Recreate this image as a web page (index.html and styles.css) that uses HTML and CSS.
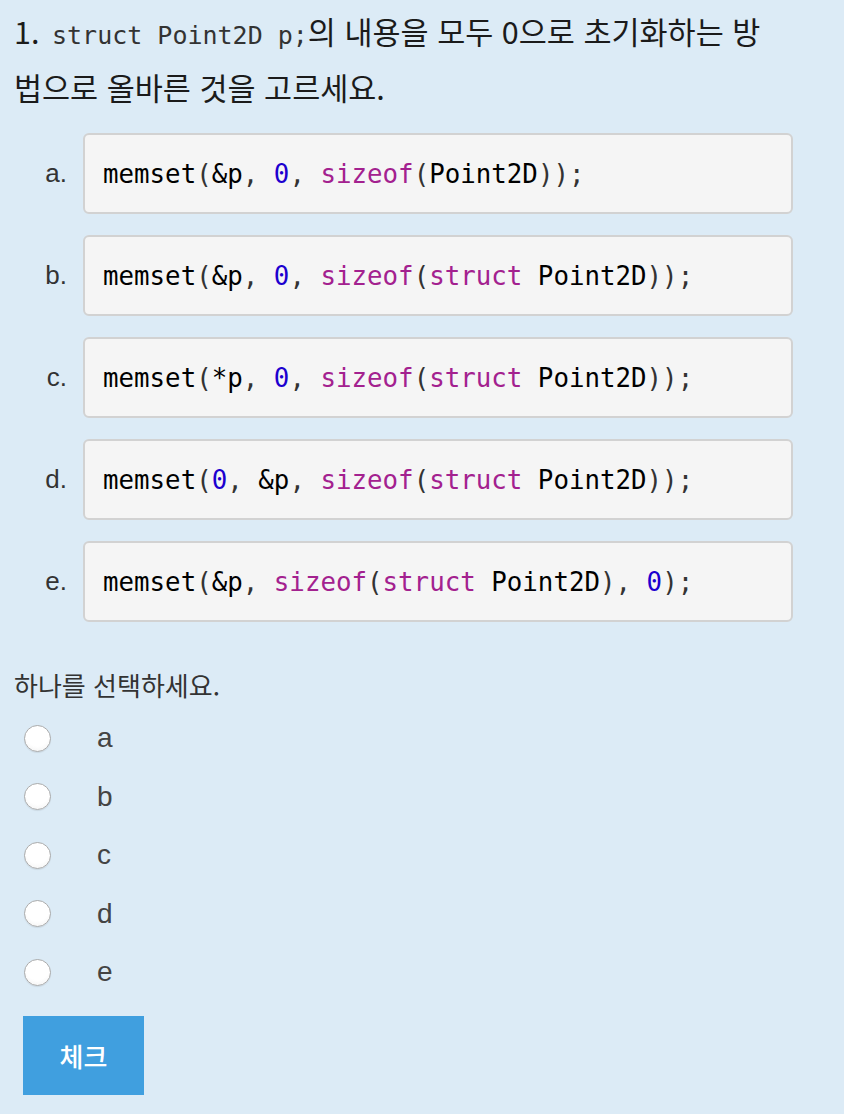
FILE: index.html
```html
<!DOCTYPE html>
<html lang="ko">
<head>
<meta charset="utf-8">
<title>Quiz</title>
<link rel="stylesheet" href="styles.css">
</head>
<body>
<div class="page">
  <div class="qtext"><span class="num">1.</span> <code class="inline">struct Point2D p;</code>의 내용을 모두 0으로 초기화하는 방법으로 올바른 것을 고르세요.</div>

  <div class="options">
    <div class="option">
      <span class="olabel">a.</span>
      <div class="codebox"><code class="src"><span class="t">memset</span><span class="p">(</span>&amp;p<span class="p">,</span> <span class="n">0</span><span class="p">,</span> <span class="k">sizeof</span><span class="p">(</span>Point2D<span class="p">));</span></code></div>
    </div>
    <div class="option">
      <span class="olabel">b.</span>
      <div class="codebox"><code class="src"><span class="t">memset</span><span class="p">(</span>&amp;p<span class="p">,</span> <span class="n">0</span><span class="p">,</span> <span class="k">sizeof</span><span class="p">(</span><span class="k">struct</span> Point2D<span class="p">));</span></code></div>
    </div>
    <div class="option">
      <span class="olabel">c.</span>
      <div class="codebox"><code class="src"><span class="t">memset</span><span class="p">(</span>*p<span class="p">,</span> <span class="n">0</span><span class="p">,</span> <span class="k">sizeof</span><span class="p">(</span><span class="k">struct</span> Point2D<span class="p">));</span></code></div>
    </div>
    <div class="option">
      <span class="olabel">d.</span>
      <div class="codebox"><code class="src"><span class="t">memset</span><span class="p">(</span><span class="n">0</span><span class="p">,</span> &amp;p<span class="p">,</span> <span class="k">sizeof</span><span class="p">(</span><span class="k">struct</span> Point2D<span class="p">));</span></code></div>
    </div>
    <div class="option">
      <span class="olabel">e.</span>
      <div class="codebox"><code class="src"><span class="t">memset</span><span class="p">(</span>&amp;p<span class="p">,</span> <span class="k">sizeof</span><span class="p">(</span><span class="k">struct</span> Point2D<span class="p">),</span> <span class="n">0</span><span class="p">);</span></code></div>
    </div>
  </div>

  <div class="prompt">하나를 선택하세요.</div>

  <div class="answers">
    <label class="answer"><span class="radio"></span><span class="alabel">a</span></label>
    <label class="answer"><span class="radio"></span><span class="alabel">b</span></label>
    <label class="answer"><span class="radio"></span><span class="alabel">c</span></label>
    <label class="answer"><span class="radio"></span><span class="alabel">d</span></label>
    <label class="answer"><span class="radio"></span><span class="alabel">e</span></label>
  </div>

  <button class="check">체크</button>
</div>
</body>
</html>
```

FILE: styles.css
```css
html, body {
  margin: 0;
  padding: 0;
  background: #dcebf6;
}

.page {
  padding: 3px 14px 0 14px;
  font-family: "Noto Sans CJK KR", "Noto Sans", sans-serif;
  color: #222;
}

.qtext {
  width: 756px;
  font-size: 30.5px;
  line-height: 56px;
  color: #1b1b1b;
}

.qtext .inline {
  font-family: "DejaVu Sans Mono", monospace;
  font-size: 25px;
  line-height: 1;
  color: #333;
  padding-left: 4px;
}

.options {
  margin-top: 18px;
  display: flex;
  flex-direction: column;
  gap: 21px;
}

.option {
  display: flex;
  align-items: center;
  gap: 16px;
}

.olabel {
  width: 53px;
  text-align: right;
  font-family: "Liberation Sans", Arial, sans-serif;
  font-size: 26px;
  color: #333;
}

.codebox {
  width: 710px;
  height: 81px;
  box-sizing: border-box;
  border: 2px solid #d2d2d2;
  border-radius: 6px;
  background: #f5f5f5;
  display: flex;
  align-items: center;
  padding-left: 18px;
}

.src {
  font-family: "DejaVu Sans Mono", monospace;
  font-size: 25.8px;
  color: #000;
  white-space: pre;
}

.src .p { color: #333; }
.src .n { color: #1c00cf; }
.src .k { color: #a3218f; }

.prompt {
  margin-top: 45px;
  font-size: 26px;
  line-height: 36px;
  color: #333;
}

.answers {
  margin-top: 6px;
  display: flex;
  flex-direction: column;
}

.answer {
  height: 58.5px;
  display: flex;
  align-items: center;
  padding-left: 10px;
}

.radio {
  width: 27px;
  height: 27px;
  box-sizing: border-box;
  border-radius: 50%;
  border: 1.5px solid #ababab;
  background: radial-gradient(circle at 50% 35%, #ffffff 55%, #f0f0f0 100%);
  box-shadow: 0 1px 1px rgba(0,0,0,0.08);
}

.alabel {
  margin-left: 46px;
  font-family: "Liberation Sans", Arial, sans-serif;
  font-size: 28px;
  color: #444;
}

.check {
  display: block;
  margin-top: 14px;
  margin-left: 9px;
  width: 121px;
  height: 79px;
  border: none;
  background: #409fdf;
  color: #fff;
  font-family: "Noto Sans CJK KR", sans-serif;
  font-size: 26px;
  font-weight: 500;
  padding: 0;
}
```
